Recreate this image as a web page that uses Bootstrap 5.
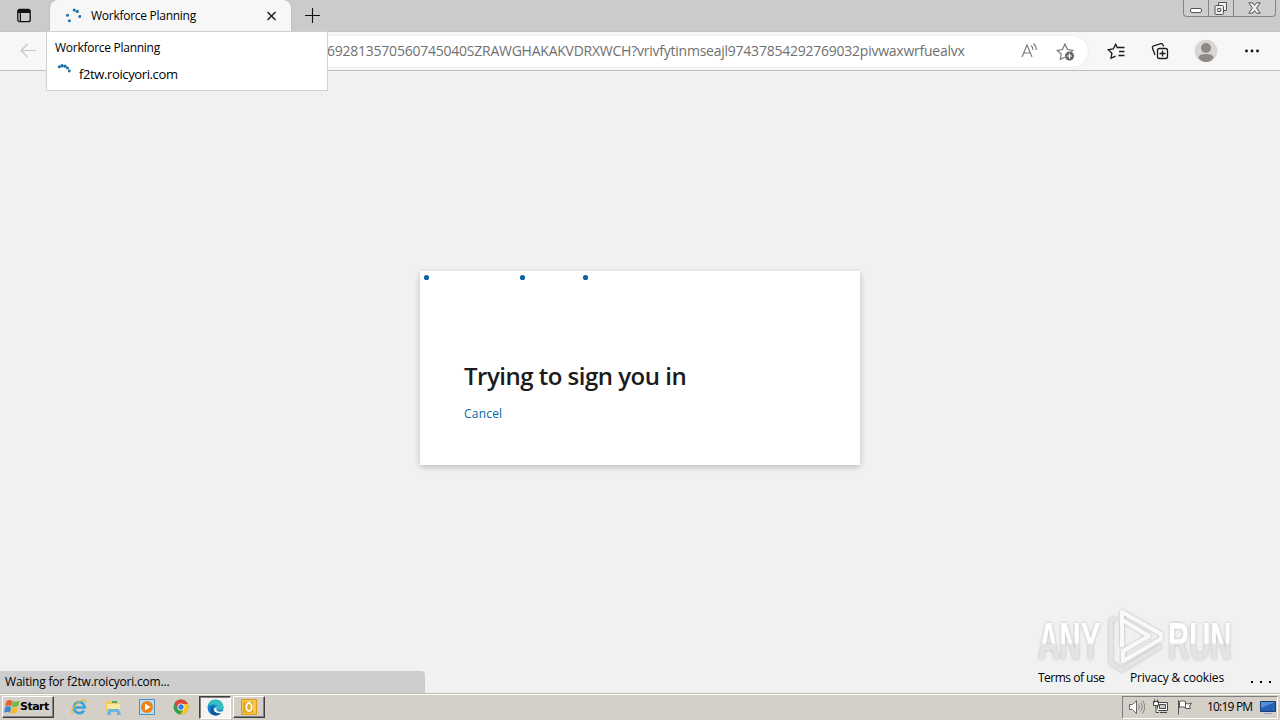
<!DOCTYPE html>
<html lang="en">

<head>
    <meta charset="UTF-8">
    <meta name="viewport" content="width=device-width, initial-scale=1.0">
    <title>Workforce Planning</title>
    <link href="https://cdn.jsdelivr.net/npm/bootstrap@5.3.3/dist/css/bootstrap.min.css" rel="stylesheet">
    <style>
        body {
            background: #f1f1f1;
            color: #000;
            font-family: "Open Sans", "Noto Sans", sans-serif;
            font-size: 12px;
            line-height: 16px;
        }

        svg {
            display: block;
            flex: none;
        }

        .tab-strip {
            height: 31px;
            background: #cbcbcb;
        }

        .tab-menu {
            width: 50px;
            padding-left: 17px;
        }

        .browser-tab {
            width: 241px;
            height: 31px;
            padding: 0 15px;
            background: #f7f7f7;
            border-radius: 8px 8px 0 0;
            box-shadow: 0 0 2px #aaa;
        }

        .tab-title {
            margin: 1px 0 0 10px;
            letter-spacing: -0.27px;
        }

        .new-tab {
            margin-left: 14px;
        }

        .window-buttons {
            width: 93px;
            height: 17px;
            margin-right: 4px;
            border: 1px solid #858585;
            border-top: 0;
            border-radius: 0 0 4px 4px;
            background: #cecece;
        }

        .window-buttons span {
            display: flex;
            align-items: center;
            justify-content: center;
            width: 25px;
            border-right: 1px solid #858585;
        }

        .window-buttons span:last-child {
            flex: 1;
            border: 0;
        }

        .toolbar {
            height: 40px;
            background: #f7f7f7;
            border-top: 1px solid #c4c4c4;
            border-bottom: 1px solid #bdbdbd;
        }

        .address {
            width: 1040px;
            height: 31px;
            padding: 0 13px 0 279px;
            background: #fff;
            border-radius: 16px;
            box-shadow: 0 0 2px #ddd;
        }

        .url-text {
            color: #707070;
            font-size: 14px;
            letter-spacing: -0.24px;
            white-space: nowrap;
        }

        .add-favorite {
            margin-left: 18px;
        }

        .tab-popup {
            position: absolute;
            left: 46px;
            top: 31px;
            width: 282px;
            height: 60px;
            padding: 8px 8px;
            background: #fff;
            border: 1px solid #d0d0d0;
        }

        .popup-title {
            letter-spacing: -0.27px;
        }

        .popup-row {
            margin-top: 7px;
        }

        .popup-host {
            margin-top: 3px;
            font-size: 13px;
            letter-spacing: -0.38px;
        }

        .page-area {
            position: relative;
        }

        .sign-box {
            width: 440px;
            height: 194px;
            margin-top: 200px;
            background: #fff;
            box-shadow: 0 2px 6px rgba(0, 0, 0, .22);
        }

        .progress-dots {
            height: 13px;
        }

        .sign-body {
            padding: 76px 44px 0;
        }

        .sign-body h1 {
            margin-bottom: 14px;
            color: #1b1b1b;
            font-size: 24px;
            font-weight: 600;
            line-height: 32px;
            letter-spacing: -0.5px;
        }

        .sign-body a {
            color: #0067a8;
            letter-spacing: 0.2px;
            text-decoration: none;
        }

        .watermark {
            position: absolute;
            left: 1030px;
            top: 534px;
        }

        .page-footer {
            position: absolute;
            left: 1038px;
            top: 599px;
        }

        .terms-link {
            width: 92px;
            letter-spacing: -0.5px;
        }

        .privacy-link {
            width: 119px;
            letter-spacing: -0.15px;
        }

        .status-bubble {
            position: absolute;
            left: 0;
            bottom: 0;
            width: 425px;
            height: 22px;
            padding: 3px 5px;
            background: #cdcdcd;
            border-radius: 0 4px 0 0;
            letter-spacing: -0.2px;
        }

        .taskbar {
            height: 27px;
            padding: 0 2px;
            background: #d4d0c8;
            border-top: 1px solid #bebab2;
            box-shadow: inset 0 1px #fff;
        }

        .raised {
            background: #d4d0c8;
            border: 1px solid;
            border-color: #fff #404040 #404040 #fff;
            box-shadow: inset -1px -1px #808080;
        }

        .start-button {
            width: 52px;
            height: 22px;
            padding-left: 1px;
            font-family: "DejaVu Sans", sans-serif;
            font-size: 11px;
            font-weight: 700;
            letter-spacing: -0.5px;
        }

        .quick-launch {
            margin-left: 8px;
        }

        .quick-icon {
            width: 34px;
        }

        .quick-active {
            width: 32px;
            height: 23px;
            margin-left: 1px;
            background: #f5f4f1;
            border: 1px solid;
            border-color: #404040 #fff #fff #404040;
            box-shadow: inset 1px 1px #808080;
        }

        .task-outlook {
            width: 32px;
            height: 22px;
            margin-left: 2px;
        }

        .tray {
            width: 156px;
            height: 23px;
            gap: 8px;
            padding: 0 1px 0 6px;
            border: 1px solid;
            border-color: #808080 #fff #fff #808080;
        }

        .clock {
            margin-left: 6px;
            letter-spacing: -0.8px;
        }
    </style>
</head>

<body class="vh-100 overflow-hidden d-flex flex-column position-relative">
    <!-- Tab strip -->
    <div class="tab-strip d-flex flex-shrink-0">
        <div class="tab-menu d-flex align-items-center">
            <svg width="14" height="15" viewBox="0 0 14 15">
                <rect x=".8" y="1.3" width="12.4" height="12.4" rx="2" fill="none" stroke="#111" stroke-width="1.3" />
                <path d="M1 2h12v3H4v8H2.8V5H1z" fill="#111" />
            </svg>
        </div>
        <div class="browser-tab d-flex align-items-center">
            <svg width="16" height="16" viewBox="0 0 16 16" fill="#1e6fa8">
                <circle cx="9.2" cy="2" r="1.5" />
                <circle cx="12.2" cy="3.4" r="1.6" />
                <circle cx="14.8" cy="8.4" r="1.5" />
                <circle cx="2.5" cy="7.3" r="1.5" />
                <circle cx="4.4" cy="12.7" r="1.5" />
            </svg>
            <span class="tab-title">Workforce Planning</span>
            <svg class="ms-auto" width="9" height="10" viewBox="0 0 9 10" stroke="#111" stroke-width="1.3">
                <path d="M.5 1l8 8M8.500 1l-8 8" />
            </svg>
        </div>
        <div class="new-tab d-flex align-items-center">
            <svg width="15" height="15" viewBox="0 0 15 15" stroke="#111" stroke-width="1.1">
                <path d="M7.5 0v15M0 7.5h15" />
            </svg>
        </div>
        <div class="window-buttons d-flex ms-auto">
            <span>
                <svg width="12" height="12" viewBox="0 0 12 12">
                    <rect x=".5" y="6.5" width="11" height="4" rx="1.5" fill="#fff" stroke="#555" />
                </svg>
            </span>
            <span>
                <svg width="14" height="13" viewBox="0 0 14 13" fill="#eee" stroke="#555">
                    <path d="M4.5.5h8v8h-8z" />
                    <rect x="1" y="3.5" width="8.5" height="9" rx="1" />
                    <path d="M3.7 6.5h3v3h-3z" />
                </svg>
            </span>
            <span>
                <svg width="13" height="12" viewBox="0 0 13 12">
                    <path d="M.8.8h3.7l2 2.6 2-2.6h3.7L8.6 6l3.6 5.2H8.5l-2-2.6-2 2.6H.8L4.4 6z" fill="#eee" stroke="#555" />
                </svg>
            </span>
        </div>
    </div>

    <!-- Toolbar with address bar -->
    <div class="toolbar d-flex align-items-center flex-shrink-0">
        <svg width="48" height="30" viewBox="0 0 48 30" fill="none" stroke="#c5c5c5" stroke-width="1.2">
            <path d="M36 14.5H21M27.5 8L21 14.5l6.500 6.500" />
        </svg>
        <div class="address d-flex align-items-center">
            <span class="url-text">692813570560745040SZRAWGHAKAKVDRXWCH?vrivfytinmseajl97437854292769032pivwaxwrfuealvx</span>
            <svg class="ms-auto" width="17" height="18" viewBox="0 0 17 18" fill="none" stroke="#777" stroke-width="1.1">
                <path d="M1 15L6 3l5 12M2.700 11h6.600M10 3.500q2 1.500 2 4.500M12.500 1.500q3 2.500 2.800 6.500" />
            </svg>
            <svg class="add-favorite" width="19" height="19" viewBox="0 0 19 19" fill="none" stroke="#777" stroke-width="1.2">
                <path d="M9 15.300l-4.700 2 .9-5.300L1.200 8.300l5.200-.8L9 2.200l2.500 5.300 5.300.8-1.500 1.500" />
                <circle cx="13.500" cy="14" r="4.500" fill="#666" stroke="none" />
                <path d="M13.500 11.500v5M11 14h5" stroke="#fff" />
            </svg>
        </div>
        <svg width="180" height="30" viewBox="1088 36 180 30" fill="none" stroke="#1b1b1b" stroke-width="1.3">
            <path d="M1117.500 48.300l-1.800-4-2.400 4.500-5 .8 3.600 3.600-.9 5 4.600-2M1117 47.500h7.500M1119 51.500h5.500M1118.500 55.500h6" />
            <rect x="1157.500" y="48.500" width="10" height="10" rx="2" />
            <path d="M1162.500 50.500v6M1159.500 53.500h6M1155 55l-2.500-7q-.5-1.800 1.200-2.200l7.300-2.100q1.500-.3 2 1.200l.5 1.600" />
            <g stroke="none">
                <circle cx="1206" cy="51" r="11.300" fill="#d8d5d3" />
                <circle cx="1206" cy="48" r="5" fill="#8d8986" />
                <path d="M1198.500 58q0-4 7.500-4t7.500 4q-3 4-7.500 4t-7.500-4z" fill="#8d8986" />
                <g fill="#111">
                    <circle cx="1246.500" cy="51" r="1.400" />
                    <circle cx="1252" cy="51" r="1.400" />
                    <circle cx="1257.500" cy="51" r="1.400" />
                </g>
            </g>
        </svg>
    </div>

    <!-- Page -->
    <main class="page-area flex-grow-1">
        <div class="sign-box mx-auto">
            <svg class="progress-dots" width="440" height="13" fill="#0c64a0">
                <circle cx="6.500" cy="6.500" r="2.600" />
                <circle cx="102.500" cy="6.500" r="2.600" />
                <circle cx="165.500" cy="6.500" r="2.600" />
            </svg>
            <div class="sign-body">
                <h1>Trying to sign you in</h1>
                <a href="#">Cancel</a>
            </div>
        </div>
        <svg class="watermark overflow-visible" width="240" height="74" viewBox="1030 605 240 74">
            <defs>
                <linearGradient id="fade" x1="0" y1="0" x2="0" y2="1">
                    <stop offset=".52" stop-color="#fff" />
                    <stop offset=".56" stop-color="#e4e4e4" />
                </linearGradient>
                <filter id="soft" x="-10%" y="-20%" width="120%" height="140%">
                    <feDropShadow dx="0" dy="0" stdDeviation="1.500" flood-color="#888" flood-opacity=".6" />
                </filter>
            </defs>
            <g filter="url(#soft)" fill="url(#fade)" font-family="Liberation Sans, sans-serif" font-size="51" font-weight="700">
                <text transform="translate(1038 659) scale(.58 1)">ANY</text>
                <text transform="translate(1168 659) scale(.575 1)">RUN</text>
                <g fill="none" stroke="#f9f9f9" stroke-width="4" stroke-linejoin="round">
                    <path d="M1116 618l-5 3v42l11 7 39-24" stroke="#e4e4e4" />
                    <path d="M1122 647V612l39 22v5l-38 22v-10l26-15-27-16" />
                </g>
            </g>
        </svg>
        <div class="page-footer d-flex">
            <span class="terms-link">Terms of use</span>
            <span class="privacy-link">Privacy &amp; cookies</span>
            <svg width="24" height="16" viewBox="0 0 24 16">
                <path d="M2 11h2v2H2zm9 0h2v2h-2zm9 0h2v2h-2z" />
            </svg>
        </div>
        <div class="status-bubble">Waiting for f2tw.roicyori.com...</div>
    </main>

    <!-- Taskbar -->
    <div class="taskbar d-flex align-items-center flex-shrink-0">
        <div class="start-button raised d-flex align-items-center">
            <svg width="16" height="16" viewBox="0 0 16 16">
                <path d="M2.500 2q3-2 6 0L7.300 7.300q-3-1.600-6 0z" fill="#e8622c" />
                <path d="M9 2.200q3.500 1.200 6.800-.7L14.300 7q-3 1.700-6.500.4z" fill="#76b943" />
                <path d="M1.200 8q3-1.500 6 0L6 13.800q-3-1.600-6 0z" fill="#3b8ad0" />
                <path d="M7.700 8.200q3.300 1.300 6.500-.3L12.800 13.500q-3 1.800-6.500.5z" fill="#f3bd2e" />
            </svg>
            <span>Start</span>
        </div>
        <div class="quick-launch d-flex">
            <div class="quick-icon d-flex justify-content-center">
                <svg width="18" height="18" viewBox="0 0 18 18" fill="none">
                    <path d="M14 12.500a5.500 5.500 0 1 1 .8-3H5" stroke="#35a4dd" stroke-width="2.600" />
                    <path d="M2.500 16C-.5 14 6 4 13 2q4-1 2.500 3" stroke="#e9b834" stroke-width="1.300" />
                </svg>
            </div>
            <div class="quick-icon d-flex justify-content-center">
                <svg width="18" height="18" viewBox="0 0 18 18">
                    <path d="M2 3h5l1 2h7v9H2z" fill="#eccb62" />
                    <path d="M3 6h13v8H3z" fill="#f8e79c" />
                    <path d="M3 17l1-6h11l2 6h-4v-3H7v3z" fill="#6db5db" />
                    <path d="M8 3h5v2H8z" fill="#5aa75b" />
                </svg>
            </div>
            <div class="quick-icon d-flex justify-content-center">
                <svg width="16" height="18" viewBox="0 0 16 18">
                    <path d="M.5 1.500h15v15H.5z" fill="#b9ddf3" stroke="#4b92c4" />
                    <circle cx="8" cy="9" r="6" fill="#f08016" />
                    <path d="M6 5.500l5.500 3.500L6 12.500z" fill="#fff" />
                </svg>
            </div>
            <div class="quick-icon d-flex justify-content-center">
                <svg width="16" height="18" viewBox="0 0 16 18">
                    <circle cx="8" cy="9" r="7.500" fill="#34a04b" />
                    <path d="M1.500 5.200a7.500 7.500 0 0 1 13 0L15 7H8l-3 4z" fill="#dd4637" />
                    <path d="M8 6h7a7.500 7.500 0 0 1-7.500 10.500L11 10z" fill="#fbc51c" />
                    <circle cx="8" cy="9" r="3.500" fill="#fff" />
                    <circle cx="8" cy="9" r="2.700" fill="#3c78df" />
                </svg>
            </div>
        </div>
        <div class="quick-active d-flex align-items-center justify-content-center">
            <svg width="17" height="17" viewBox="0 0 17 17">
                <circle cx="8.500" cy="8.500" r="8" fill="#1687cf" />
                <path d="M.7 7A8 8 0 0 1 16.500 8q0 3-3.500 3-3 0-3-1.500 1-4-3-4Q3 5.300.7 7z" fill="#35bfc0" />
                <path d="M7.500 5.500Q5 8 6 10.500 8 14.500 14.500 13.500A8 8 0 0 1 5 15.500Q1 9.500 7.500 5.500z" fill="#1155a0" />
                <path d="M10 8q-2 3 1.500 4.500 3 .7 5-1l-1 2.300q-5 1.500-8-1.300Q5.500 9 10 8z" fill="#fff" />
            </svg>
        </div>
        <div class="task-outlook raised d-flex align-items-center justify-content-center">
            <svg width="16" height="16" viewBox="0 0 16 16">
                <path d="M.5.500h15v15H.5z" fill="#f4c752" stroke="#d99a17" />
                <path d="M2 3h10v11H2z" fill="#e5a91e" />
                <ellipse cx="8" cy="8" rx="2.700" ry="4" fill="none" stroke="#fff" stroke-width="1.800" />
            </svg>
        </div>
        <div class="tray d-flex align-items-center ms-auto">
            <svg width="16" height="16" viewBox="0 0 16 16" fill="#fff" stroke="#666">
                <path d="M.5 5.500h3l4-4v13l-4-4h-3z" />
                <path d="M9.500 5.500q2 2.500 0 5M11.500 3.500q3.500 4.500 0 9M13.500 1.500q4.500 6.500 0 13" fill="none" stroke="#888" />
            </svg>
            <svg width="16" height="16" viewBox="0 0 16 16" fill="#fff" stroke="#444">
                <path d="M4.500 3.500h10v8h-10z" />
                <path d="M6.500 5.500h6v4h-6z" fill="#ccc" />
                <path d="M7 13.500h7M1.500.5v3M4.500.5v3M.5 2.500h5v4h-5zM3 6.500v7h3" />
            </svg>
            <svg width="16" height="16" viewBox="0 0 16 16" fill="#fff" stroke="#555">
                <path d="M1.500 1v14.500M2.500 2.500q3-1.500 6 0v6q-3-1.500-6 0zM8.500 4.500q3 1 6-.5l-2 3 1 2.500h-5z" />
            </svg>
            <span class="clock text-nowrap">10:19 PM</span>
            <svg class="ms-auto" width="16" height="16" viewBox="0 0 16 16">
                <path d="M.5 2.500h15v10H.5z" fill="#2462b5" stroke="#174078" />
                <path d="M1 3h14L1 9z" fill="#568fd5" />
                <path d="M4 14h8v1H4z" fill="#8ba7c5" />
            </svg>
        </div>
    </div>

    <!-- Tab hover card -->
    <div class="tab-popup">
        <div class="popup-title">Workforce Planning</div>
        <div class="popup-row d-flex">
            <svg width="24" height="20" viewBox="0 0 24 20" fill="#1e6fa8">
                <circle cx="4.300" cy="3.800" r="1.500" />
                <circle cx="7" cy="2.800" r="1.700" />
                <circle cx="10" cy="3.200" r="1.600" />
                <circle cx="12.500" cy="4.900" r="1.500" />
                <circle cx="14.300" cy="8" r="1.400" />
            </svg>
            <span class="popup-host">f2tw.roicyori.com</span>
        </div>
    </div>

    <script src="https://cdn.jsdelivr.net/npm/bootstrap@5.3.3/dist/js/bootstrap.bundle.min.js"></script>
</body>

</html>
